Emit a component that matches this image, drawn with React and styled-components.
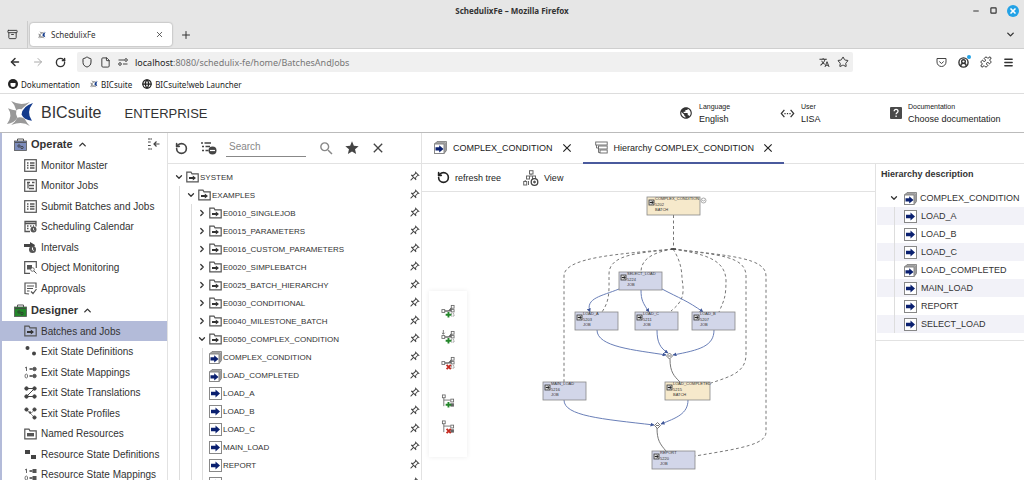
import { useState } from 'react';
import styled, { createGlobalStyle, css } from 'styled-components';
import {
    ArrowLeft,
    ArrowRight,
    Archive,
    ChevronDown,
    ChevronRight,
    ChevronUp,
    CircleUserRound,
    File,
    Globe,
    Menu,
    Minus,
    Plus,
    Puzzle,
    RotateCcw,
    RotateCw,
    Shield,
    Square,
    Star,
    X,
} from 'lucide-react';
import {
    MdClose,
    MdOutlinePushPin,
    MdPublic,
    MdSearch,
    MdSettingsEthernet,
    MdStar,
    MdTranslate,
} from 'react-icons/md';

const GlobalStyle = createGlobalStyle`
    * {
        box-sizing: border-box;
    }
    body {
        margin: 0;
        background: #fff;
        color: #333;
        font-family: 'Liberation Sans', Arial, sans-serif;
        font-size: 10px;
        overflow: hidden;
    }
    button, input {
        font: inherit;
        color: inherit;
    }
    button {
        padding: 0;
        border: none;
        background: none;
        cursor: pointer;
    }
    svg {
        display: block;
        flex: none;
    }
    ul {
        list-style: none;
        margin: 0;
        padding: 0;
    }
`;

/* ---------- browser window ---------- */

const Window = styled.div`
    display: flex;
    flex-direction: column;
    height: 100vh;
`;

const Chrome = styled.div`
    flex: none;
    font-family: 'Noto Sans', sans-serif;
    font-size: 8px;
    color: #333;
`;

const TitleBar = styled.div`
    display: grid;
    grid-template-columns: 1fr auto 1fr;
    align-items: center;
    height: 21px;
    padding: 0 5px;
    background: #e6e6e6;
    font-weight: bold;
`;

const WindowButtons = styled.div`
    grid-column: 3;
    display: flex;
    justify-content: flex-end;
    align-items: center;
    gap: 10px;
`;

const CloseWindow = styled.button`
    display: grid;
    place-items: center;
    width: 12px;
    height: 12px;
    border-radius: 50%;
    background: #23a2e6;
    color: #fff;
`;

const TabStrip = styled.div`
    display: flex;
    align-items: center;
    height: 28px;
    padding: 0 8px 0 7px;
    background: #e6e6e6;
    border-bottom: 1px solid #cfcfcf;
`;

const StripDivider = styled.div`
    align-self: stretch;
    width: 1px;
    margin: 0 2px 0 9px;
    background: #ccc;
`;

const BrowserTab = styled.div`
    display: flex;
    align-items: center;
    gap: 5px;
    width: 142px;
    height: 23px;
    padding: 0 8px;
    margin-right: 8px;
    border-radius: 3px;
    background: #fff;
    box-shadow: 0 0 2px rgba(0, 0, 0, 0.4);
    span {
        flex: 1;
    }
`;

const Push = styled.div`
    flex: 1;
`;

const NavBar = styled.div`
    display: flex;
    align-items: center;
    gap: 11px;
    height: 26px;
    padding: 0 10px 0 9px;
`;

const UrlBox = styled.div`
    flex: 1;
    display: flex;
    align-items: center;
    gap: 7px;
    height: 20px;
    padding: 0 4px;
    margin-right: 72px;
    border-radius: 2px;
    background: #f0f0f0;
`;

const Address = styled.div`
    flex: 1;
    color: #777;
    font-size: 9px;
    b {
        font-weight: normal;
        color: #222;
    }
`;

const AccountIcon = styled.button`
    position: relative;
    &::after {
        content: '';
        position: absolute;
        top: -2px;
        right: -2px;
        width: 4px;
        height: 4px;
        border-radius: 50%;
        background: #23a2e6;
    }
`;

const Bookmarks = styled.div`
    display: flex;
    align-items: center;
    gap: 10px;
    height: 19px;
    padding-left: 8px;
    border-bottom: 1px solid #ddd;
`;

const Bookmark = styled.a`
    display: flex;
    align-items: center;
    gap: 3px;
    color: #222;
    text-decoration: none;
`;

/* ---------- application header ---------- */

const Header = styled.header`
    flex: none;
    display: flex;
    align-items: center;
    height: 39px;
    padding: 0 24px 0 7px;
    border-bottom: 1px solid #bbb;
`;

const Brand = styled.span`
    margin: 0 23px 0 7px;
    font-size: 16px;
`;

const Edition = styled.span`
    flex: 1;
    font-size: 13px;
`;

const HeaderInfo = styled.div`
    display: grid;
    grid-template-columns: 101px 110px 110px;
`;

const InfoButton = styled.button`
    display: flex;
    align-items: center;
    gap: 6px;
    text-align: left;
    white-space: nowrap;
`;

const InfoText = styled.span`
    display: flex;
    flex-direction: column;
    font-size: 9px;
    line-height: 13px;
    color: #222;
    small {
        font-size: 7px;
        line-height: 12px;
    }
`;

/* ---------- sidebar ---------- */

const Body = styled.div`
    flex: 1;
    min-height: 0;
    display: flex;
`;

const Sidebar = styled.nav`
    flex: none;
    width: 168px;
    overflow: hidden;
    border-left: 2px solid #b3bbd9;
    border-right: 1px solid #e2e2e2;
`;

const Group = styled.section`
    padding-bottom: 1px;
`;

const GroupHeader = styled.div`
    display: flex;
    align-items: center;
    justify-content: space-between;
    height: 22px;
    padding: 0 7px 0 12px;
`;

const GroupToggle = styled.button`
    display: flex;
    align-items: center;
    gap: 4px;
    font-size: 11px;
    font-weight: bold;
`;

const MenuRow = styled.li`
    height: 20px;
    &:nth-child(even) {
        height: 21px;
    }
    ${(props) => props.$selected && css`
        background: #b3bbd9;
    `}
`;

const MenuLink = styled.a`
    display: flex;
    align-items: center;
    gap: 4px;
    height: 100%;
    padding-left: 22px;
    color: inherit;
    font-size: 10px;
    text-decoration: none;
    white-space: nowrap;
`;

/* ---------- object tree ---------- */

const TreePanel = styled.section`
    flex: none;
    width: 254px;
    overflow: hidden;
    border-right: 1px solid #e2e2e2;
`;

const TreeToolbar = styled.div`
    display: flex;
    align-items: center;
    height: 31px;
    padding-left: 6px;
    border-bottom: 1px solid #e2e2e2;
    color: #444;
`;

const SearchInput = styled.input`
    width: 80px;
    height: 17px;
    margin: 0 12px 0 9px;
    padding: 0 3px 2px;
    border: none;
    border-bottom: 1px solid #888;
    outline: none;
    background: none;
    &::placeholder {
        color: #888;
    }
`;

const ToolButton = styled.button`
    display: grid;
    place-items: center;
    width: 14px;
    height: 16px;
    margin-right: ${(props) => props.$gap || 12}px;
`;

const TreeList = styled.ul`
    padding: 4px 0;
`;

const TreeRow = styled.li`
    display: flex;
    align-items: center;
    height: 18px;
    padding: 0 0 0 5px;
    font-size: ${(props) => props.$size || 8}px;
    white-space: nowrap;
    background: ${(props) => (props.$shaded ? '#f2f2f8' : 'none')};
`;

const Guide = styled.span`
    width: ${(props) => (props.$last ? 5 : 6)}px;
    height: 100%;
    margin-left: 6px;
    border-left: 1px solid #ddd;
`;

const Twisty = styled.button`
    display: grid;
    place-items: center;
    width: 12px;
    height: 12px;
    margin-right: 1px;
`;

const Branch = styled.span`
    width: ${(props) => props.$width}px;
    height: 1px;
    margin-right: 2px;
    background: ${(props) => (props.$plain ? 'none' : '#ddd')};
`;

const NodeName = styled.span`
    flex: 1;
    padding-left: ${(props) => props.$pad || 1}px;
`;

const PinButton = styled.button`
    margin-right: 1px;
    color: #444;
    svg {
        transform: rotate(45deg);
    }
`;

/* ---------- work area ---------- */

const Work = styled.main`
    flex: 1;
    min-width: 0;
    display: flex;
    flex-direction: column;
`;

const Tabs = styled.div`
    flex: none;
    display: flex;
    height: 31px;
    border-bottom: 1px solid #e2e2e2;
    font-size: 9px;
    color: #222;
`;

const Tab = styled.div`
    display: flex;
    align-items: center;
    padding: 0 9px 0 12px;
    margin-bottom: -1px;
    border-bottom: 2px solid ${(props) => (props.$active ? '#4a5a9d' : 'transparent')};
    span {
        margin: 0 7px 0 6px;
    }
`;

const Columns = styled.div`
    flex: 1;
    min-height: 0;
    display: flex;
`;

const Hierarchy = styled.section`
    flex: 1;
    min-width: 0;
`;

const Actions = styled.div`
    display: flex;
    align-items: center;
    gap: 22px;
    height: 28px;
    padding-left: 15px;
    border-bottom: 1px solid #e2e2e2;
`;

const Action = styled.button`
    display: flex;
    align-items: center;
    gap: 5px;
    font-size: 9px;
    color: #222;
`;

const Canvas = styled.div`
    position: relative;
    display: flex;
    justify-content: center;
`;

const Palette = styled.div`
    position: absolute;
    left: 7px;
    top: 99px;
    display: flex;
    flex-direction: column;
    align-items: center;
    gap: 12px;
    width: 38px;
    padding: 13px 0 23px;
    background: #fff;
    box-shadow: 0 0 5px rgba(0, 0, 0, 0.08);
    button:nth-child(4) {
        margin-top: 12px;
    }
`;

const Description = styled.aside`
    flex: none;
    width: 149px;
    border-left: 1px solid #e2e2e2;
    h2 {
        margin: 0;
        padding: 3px 0 5px 5px;
        font-size: 9px;
        line-height: 15px;
    }
`;

const DescriptionTree = styled.ul`
    padding: 2px 0 7px 1px;
    border-bottom: 1px solid #e2e2e2;
`;

/* ---------- icons ---------- */

const LogoIcon = ({ size }) => (
    <svg width={size} height={size} viewBox="0 0 26 26">
        <path d="M4 1Q13 6 22 2Q16 7 14 9Q11 8 9 10Q8 5 4 1Z" fill="#999" />
        <path d="M1 8Q5 10 9 10Q8 13 10 17Q7 22 0 23Q6 15 1 8Z" fill="#999" />
        <path d="M10 17Q13 16 17 18Q19 22 22 25Q15 20 4 24Q8 21 10 17Z" fill="#999" />
        <path d="M25 3Q18 12 24 20Q16 19 14 14Q15 6 25 3Z" fill="#123a8c" />
    </svg>
);

const FolderIcon = ({ bar }) => (
    <svg width="13" height="12" viewBox="0 0 13 12">
        <path d="M.8 10.8V1.2H5l1 1.6h6.2v8z" fill="none" stroke="#555" strokeWidth="1.2" />
        {bar ? (
            <rect x="3" y="5" width="7" height="3.4" fill="#555" />
        ) : (
            <path d="M3 6h3.800V4.500L10 7 6.800 9.500V8H3z" fill="#333" />
        )}
    </svg>
);

const JobIcon = () => (
    <svg width="13" height="13" viewBox="0 0 13 13">
        <rect x=".5" y=".5" width="12" height="12" fill="#fff" stroke="#888" />
        <path d="M2 4.8h4.5V2.6L11 6.5 6.500 10.400V8.200H2z" fill="#0a2070" />
    </svg>
);

const BatchIcon = () => (
    <svg width="13" height="13" viewBox="0 0 13 13">
        <path d="M3 .5h9.500V9.500L10 12.500V3H.5z" fill="#ccc" stroke="#777" strokeWidth=".8" />
        <path d="M1.800 1.800H11.300V11" fill="none" stroke="#777" strokeWidth=".7" />
        <rect x=".5" y="3" width="9.500" height="9.500" fill="#fff" stroke="#888" />
        <path d="M1.500 6.200h3.700V4.300l4.300 3.600-4.300 3.600V9.600H1.500z" fill="#0a2070" />
    </svg>
);

const CaseIcon = ({ color }) => (
    <svg width="13" height="13" viewBox="0 0 13 13">
        <path d="M3.500 3V1h6v2" fill="none" stroke="#555" />
        <rect x=".5" y="3" width="12" height="9.500" fill={color} stroke="#555" strokeWidth=".8" />
        <path d="M1 4.500h11" stroke="#444" strokeWidth=".8" />
        <circle cx="5" cy="8" r="1.200" fill="none" stroke="#333" strokeWidth=".8" />
        <circle cx="8" cy="9.500" r="1.200" fill="none" stroke="#333" strokeWidth=".8" />
    </svg>
);

const menuDrawings = {
    list: (
        <g fill="none" stroke="#555">
            <rect x=".7" y=".7" width="11.600" height="11.600" strokeWidth="1.200" />
            <path d="M3 4h1.500M3 6.500h1.500M3 9h1.500M6 4h4.500M6 6.500h4.500M6 9h4.500" strokeWidth="1.300" />
        </g>
    ),
    jobs: (
        <g fill="none" stroke="#555">
            <rect x=".7" y=".7" width="11.600" height="11.600" strokeWidth="1.200" />
            <path d="M3 3.500h3M4 3.500v6M5 6.500h5M5 9.500h5M8 3.500h2.500" strokeWidth="1.300" />
        </g>
    ),
    calendar: (
        <g fill="none" stroke="#555">
            <path d="M6 11.500H1V1.500h11v5M1 3.500h11" strokeWidth="1.300" />
            <path d="M3 6h1.500M6 6h1.500M3 8.500h1.500M9 6h1" strokeWidth="1.300" />
            <circle cx="9.500" cy="9.500" r="3" fill="#555" stroke="none" />
            <path d="M9.500 8v2l1 .5" stroke="#fff" strokeWidth=".7" />
        </g>
    ),
    interval: (
        <g>
            <path d="M0 3h6V1l5 3-1 2H0z" fill="#444" />
            <circle cx="8.500" cy="8.500" r="3.500" fill="#555" />
            <path d="M8.500 6.500v2.300l1.300.7" stroke="#fff" fill="none" />
        </g>
    ),
    monitor: (
        <g fill="none" stroke="#555">
            <path d="M6 12.300H.7V.7h11.600V7" strokeWidth="1.200" />
            <rect x="3" y="4" width="5" height="4.500" fill="#555" stroke="none" />
            <circle cx="8.500" cy="8.500" r="1.800" fill="#fff" strokeWidth=".8" />
            <path d="M10 10l2.500 2.500" />
        </g>
    ),
    approve: (
        <g fill="none" stroke="#555" strokeWidth="1.200">
            <path d="M5 12L1 11.500V1h11v5M3 4h7M3 6.500h6M3 9h2.500M7 9.500l2 2 3.500-4.500" />
        </g>
    ),
    dots: (
        <g fill="#444">
            <circle cx="3.500" cy="3" r="2" />
            <circle cx="10" cy="8.500" r="2" />
        </g>
    ),
    mapping: (
        <g fill="#555" stroke="#555">
            <path d="M1 2l1.500-1v4M5 3h4M5 10h4" fill="none" strokeWidth=".9" />
            <ellipse cx="2.300" cy="10" rx="1.300" ry="2" fill="none" strokeWidth=".8" />
            <circle cx="7" cy="3" r=".6" />
            <circle cx="7" cy="10" r=".6" />
            <circle cx="10.500" cy="3" r="1.700" />
            <circle cx="10.500" cy="10" r="1.700" />
        </g>
    ),
    translation: (
        <g fill="#444" stroke="#444">
            <path d="M2.500 2.500h8l-8 8h8" fill="none" />
            <circle cx="2.500" cy="2.500" r="1.700" />
            <circle cx="10.500" cy="2.500" r="1.700" />
            <circle cx="2.500" cy="10.500" r="1.700" />
            <circle cx="10.500" cy="10.500" r="1.700" />
        </g>
    ),
    profile: (
        <g fill="#444" stroke="#444">
            <path d="M2 2.500l5 4 3.500-4M6 6l4.500 4.500" fill="none" strokeWidth=".6" />
            <circle cx="2.500" cy="2.500" r="1.600" />
            <circle cx="10.500" cy="2.500" r="1.600" />
            <circle cx="6" cy="5.500" r=".8" />
            <circle cx="10.500" cy="10.500" r="1.600" />
        </g>
    ),
    squares: (
        <g fill="#444">
            <rect x="1" y="2" width="5" height="4" />
            <rect x="7" y="7" width="5" height="4" />
        </g>
    ),
    squareMapping: (
        <g fill="#555" stroke="#555">
            <path d="M1 2l1.500-1v4M5 3h4M5 10h4" fill="none" strokeWidth=".9" />
            <ellipse cx="2.300" cy="10" rx="1.300" ry="2" fill="none" strokeWidth=".8" />
            <circle cx="7" cy="3" r=".6" />
            <circle cx="7" cy="10" r=".6" />
            <rect x="9" y="1.500" width="3" height="3" />
            <rect x="9" y="8.500" width="3" height="3" />
        </g>
    ),
};

const MenuIcon = ({ name }) => {
    if (name === 'folder') return <FolderIcon />;
    if (name === 'resource') return <FolderIcon bar />;
    return (
        <svg width="13" height="13" viewBox="0 0 13 13">
            {menuDrawings[name]}
        </svg>
    );
};

const CollapseIcon = () => (
    <svg width="13" height="12" viewBox="0 0 13 12">
        <path d="M1 1h4M1 4h3M1 7.500h3M1 11h4" stroke="#444" strokeWidth="1.200" strokeDasharray="2.500 .3" />
        <path d="M12.500 6H7M9.500 3.500L7 6l2.500 2.500" fill="none" stroke="#444" strokeWidth="1.200" />
    </svg>
);

const CollapseTreeIcon = () => (
    <svg width="17" height="14" viewBox="0 0 17 14">
        <path d="M1 2h2M4.500 2H11M2 5.500h2M5.500 5.500H10M2 9.500h2M5.500 9.500h3" stroke="#444" strokeWidth="1.700" />
        <circle cx="12.500" cy="9.500" r="4" fill="#444" />
        <path d="M10 9.500h5" stroke="#fff" strokeWidth="1.200" />
    </svg>
);

const HierarchyIcon = () => (
    <svg width="13" height="13" viewBox="0 0 13 13">
        <g fill="#fff" stroke="#666" strokeWidth=".9">
            <path d="M1.500 3v4h3M3.500 6v5.500h3" fill="none" />
            <rect x=".7" y="1" width="11.500" height="3" />
            <rect x="3.500" y="5" width="8.700" height="3" />
            <rect x="5" y="9" width="7.200" height="3" />
        </g>
    </svg>
);

const ViewIcon = () => (
    <svg width="16" height="16" viewBox="0 0 16 16">
        <g fill="none" stroke="#666">
            <rect x="6.500" y=".7" width="3.500" height="3.300" />
            <rect x="3.500" y="6" width="3" height="3" />
            <rect x="9.500" y="6" width="3" height="3" />
            <path d="M8 4v3" />
            <path d="M2.200 11.500V10" />
            <rect x=".7" y="11.500" width="3" height="3.500" />
            <path d="M5.500 15v-4" />
            <circle cx="11.500" cy="12" r="3.300" fill="#fff" stroke="#444" strokeWidth="1.300" />
            <circle cx="11.500" cy="12" r="1" fill="#333" />
        </g>
    </svg>
);

const PaletteIcon = ({ side, arrow, remove }) => (
    <svg width="14" height="14" viewBox="0 0 15 15">
        <g fill="#fff" stroke="#666" strokeWidth=".9">
            {side ? (
                <>
                    <path d="M3 4v9M3 6.500h7" fill="none" />
                    <rect x="1.500" y="1" width="3" height="3" />
                    <rect x="10.500" y="5.500" width="3" height="3" />
                    <rect x="10.500" y="10.500" width="3" height="2.500" fill="#666" />
                </>
            ) : (
                <>
                    <path d="M4 7.500h7v-3.500l-3 3.500z" fill="#666" strokeWidth="1" />
                    {arrow && <path d="M2.500 0v4.500M1 3l1.500 1.500L4 3" fill="none" />}
                    <rect x="1" y="6" width="3" height="3" />
                    <rect x="11" y="1.500" width="3" height="3" />
                    <rect x="11" y="6" width="3" height="2.500" />
                    <rect x="11" y="10.500" width="3" height="2.500" strokeDasharray="1 1" />
                </>
            )}
        </g>
        {remove ? (
            <path d="M6 9.500l4.500 4.500M10.500 9.500L6 14" stroke="#c42a20" strokeWidth="2" />
        ) : (
            <path d="M8 8.500v6M5 11.500h6" stroke="#23862a" strokeWidth="2" />
        )}
    </svg>
);

const HelpIcon = () => (
    <svg width="12" height="12" viewBox="0 0 12 12">
        <rect width="12" height="12" rx="1" fill="#4a4a4a" />
        <path d="M4.200 4.300C4.200 1.700 8 1.800 8 4.200 8 5.700 6.100 5.700 6.100 7.300M6.100 8.400v1.500" fill="none" stroke="#fff" strokeWidth="1.300" />
    </svg>
);

const PermissionsIcon = () => (
    <svg width="10" height="8" viewBox="0 0 10 8" fill="none" stroke="#444">
        <path d="M.5 2H6M5 6h4.500" />
        <circle cx="8" cy="2" r="1.300" />
        <circle cx="2" cy="6" r="1.300" />
    </svg>
);

const PocketIcon = () => (
    <svg width="11" height="11" viewBox="0 0 11 11" fill="none" stroke="#444">
        <path d="M1 1.500h9v3.500a4.500 4.500 0 0 1-9 0zM3.300 4.500L5.500 6.500l2.200-2" />
    </svg>
);

const DocumentationMark = () => (
    <svg width="10" height="10" viewBox="0 0 10 10">
        <circle cx="5" cy="5" r="5" fill="#222" />
        <path d="M2.500 4h5v1.500a2.500 2.500 0 0 1-5 0z" fill="#fff" />
    </svg>
);

/* ---------- data ---------- */

const operateItems = [
    ['Monitor Master', 'list'],
    ['Monitor Jobs', 'jobs'],
    ['Submit Batches and Jobs', 'list'],
    ['Scheduling Calendar', 'calendar'],
    ['Intervals', 'interval'],
    ['Object Monitoring', 'monitor'],
    ['Approvals', 'approve'],
];

const designerItems = [
    ['Batches and Jobs', 'folder'],
    ['Exit State Definitions', 'dots'],
    ['Exit State Mappings', 'mapping'],
    ['Exit State Translations', 'translation'],
    ['Exit State Profiles', 'profile'],
    ['Named Resources', 'resource'],
    ['Resource State Definitions', 'squares'],
    ['Resource State Mappings', 'squareMapping'],
];

const treeNodes = [
    { name: 'SYSTEM', depth: 0, type: 'folder', open: true },
    { name: 'EXAMPLES', depth: 1, type: 'folder', open: true },
    { name: 'E0010_SINGLEJOB', depth: 2, type: 'folder' },
    { name: 'E0015_PARAMETERS', depth: 2, type: 'folder' },
    { name: 'E0016_CUSTOM_PARAMETERS', depth: 2, type: 'folder' },
    { name: 'E0020_SIMPLEBATCH', depth: 2, type: 'folder' },
    { name: 'E0025_BATCH_HIERARCHY', depth: 2, type: 'folder' },
    { name: 'E0030_CONDITIONAL', depth: 2, type: 'folder' },
    { name: 'E0040_MILESTONE_BATCH', depth: 2, type: 'folder' },
    { name: 'E0050_COMPLEX_CONDITION', depth: 2, type: 'folder', open: true },
    { name: 'COMPLEX_CONDITION', depth: 3, type: 'batch' },
    { name: 'LOAD_COMPLETED', depth: 3, type: 'batch' },
    { name: 'LOAD_A', depth: 3, type: 'job' },
    { name: 'LOAD_B', depth: 3, type: 'job' },
    { name: 'LOAD_C', depth: 3, type: 'job' },
    { name: 'MAIN_LOAD', depth: 3, type: 'job' },
    { name: 'REPORT', depth: 3, type: 'job' },
    { name: 'SELECT_LOAD', depth: 3, type: 'job' },
];

const hierarchyChildren = [
    ['LOAD_A', 'job'],
    ['LOAD_B', 'job'],
    ['LOAD_C', 'job'],
    ['LOAD_COMPLETED', 'batch'],
    ['MAIN_LOAD', 'job'],
    ['REPORT', 'job'],
    ['SELECT_LOAD', 'job'],
];

const graphNodes = [
    { name: 'COMPLEX_CONDITION', id: '5202', x: 225, y: 5, w: 53, batch: true },
    { name: 'SELECT_LOAD', id: '5224', x: 197, y: 80, w: 43 },
    { name: 'LOAD_A', id: '5203', x: 153, y: 120, w: 43 },
    { name: 'LOAD_C', id: '5211', x: 213, y: 120, w: 43 },
    { name: 'LOAD_B', id: '5207', x: 270, y: 120, w: 43 },
    { name: 'MAIN_LOAD', id: '5216', x: 121, y: 190, w: 43 },
    { name: 'LOAD_COMPLETED', id: '5215', x: 243, y: 190, w: 45, batch: true },
    { name: 'REPORT', id: '5220', x: 230, y: 259, w: 43 },
];

const childEdges = [
    'M251.500 23V57',
    'M251 57C198 62 142 65 142 84V190',
    'M251 57C233 60 219 66 219 80',
    'M251 57C222 61 187 61 187 82C187 100 188 108 180 120',
    'M251 57C257 66 260 76 260 87C263 104 260 110 249 119',
    'M251 57C282 62 303 67 304 88C304 106 302 108 297 120',
    'M251 57C296 63 324 64 324 84V162C324 180 310 184 289 191',
    'M251 57C310 64 344 66 344 84V240C344 252 322 256 273 264',
];

const dependencyEdges = [
    'M197 97C180 104 163 106 168 120',
    'M219 98C219 108 221 111 227 120',
    'M240 97C257 106 266 109 281 120',
    'M175 138C175 155 213 158 244 163',
    'M235 138C235 150 238 156 246 161',
    'M292 138C292 154 278 158 251 163',
    'M142 208C142 224 180 227 232 233',
    'M266 208C266 222 254 226 239 232',
];

const joinEdges = ['M248 167C248 180 252 184 258 190', 'M235 236C235 248 238 252 244 259'];

/* ---------- components ---------- */

function MenuGroup({ title, color, items, open, onToggle, extra, selected }) {
    return (
        <Group>
            <GroupHeader>
                <GroupToggle onClick={onToggle} aria-expanded={open}>
                    <CaseIcon color={color} />
                    {title}
                    {open ? <ChevronUp size={11} strokeWidth={3} /> : <ChevronDown size={11} strokeWidth={3} />}
                </GroupToggle>
                {extra}
            </GroupHeader>
            {open && (
                <ul>
                    {items.map(([label, icon]) => (
                        <MenuRow key={label} $selected={label === selected}>
                            <MenuLink href="#">
                                <MenuIcon name={icon} />
                                {label}
                            </MenuLink>
                        </MenuRow>
                    ))}
                </ul>
            )}
        </Group>
    );
}

function TypeIcon({ type }) {
    if (type === 'folder') return <FolderIcon />;
    return type === 'batch' ? <BatchIcon /> : <JobIcon />;
}

function TreeNode({ node }) {
    const isFolder = node.type === 'folder';
    const guides = isFolder ? node.depth : node.depth - 1;
    return (
        <TreeRow>
            {Array.from({ length: guides }, (_, i) => (
                <Guide key={i} $last={i > 0} />
            ))}
            {isFolder ? (
                <Twisty aria-label={node.open ? 'Collapse' : 'Expand'}>
                    {node.open ? <ChevronDown size={10} strokeWidth={3} /> : <ChevronRight size={10} strokeWidth={3} />}
                </Twisty>
            ) : (
                <>
                    <Guide $last />
                    <Branch $width={0} />
                </>
            )}
            <TypeIcon type={node.type} />
            <NodeName>{node.name}</NodeName>
            <PinButton aria-label="Pin">
                <MdOutlinePushPin size={12} />
            </PinButton>
        </TreeRow>
    );
}

function GraphNode({ node }) {
    return (
        <g transform={`translate(${node.x} ${node.y})`}>
            <rect width={node.w} height="18" fill={node.batch ? '#f6e9cb' : '#d2d6e9'} stroke="#888" strokeWidth=".8" />
            <rect x="2" y="3" width="5" height="5" fill="#ddd" stroke="#333" strokeWidth=".8" />
            <path d="M2.800 5.500h3M4.700 4.200l1.600 1.300-1.600 1.300" stroke="#111" strokeWidth=".9" fill="none" />
            <g fontSize="4" fill="#333">
                <text x="8" y="3">{node.name}</text>
                <text x="8" y="9">{node.id}</text>
                <text x="8" y="14">{node.batch ? 'BATCH' : 'JOB'}</text>
            </g>
        </g>
    );
}

function Graph() {
    return (
        <svg width="454" height="288" viewBox="0 0 454 288">
            <defs>
                <marker id="tip" viewBox="0 0 4 4" refX="3.500" refY="2" markerWidth="4" markerHeight="4" orient="auto" markerUnits="userSpaceOnUse">
                    <path d="M0 0L4 2 0 4z" fill="#3f5799" />
                </marker>
            </defs>
            <g fill="none" stroke="#777" strokeDasharray="3 2.500">
                {childEdges.map((d) => <path key={d} d={d} />)}
            </g>
            <g fill="none" stroke="#6a7fb8">
                {dependencyEdges.map((d) => <path key={d} d={d} markerEnd="url(#tip)" />)}
            </g>
            <g fill="none" stroke="#777">
                {joinEdges.map((d) => <path key={d} d={d} />)}
            </g>
            <path d="M249 57h5" stroke="#333" strokeWidth="1.200" />
            <g fill="#fff" stroke="#666" strokeWidth=".9">
                <path d="M247.500 161l3 3-3 3-3-3zM235.500 230.500l3 3-3 3-3-3z" />
                <path d="M246 164h3M234 233.500h3" />
                <circle cx="281.500" cy="8.500" r="2.500" stroke="#888" strokeWidth=".7" />
                <path d="M280 8l1.500 1 1.500-1" fill="none" stroke="#888" strokeWidth=".7" />
            </g>
            {graphNodes.map((node) => <GraphNode key={node.name} node={node} />)}
        </svg>
    );
}

function BrowserChrome() {
    return (
        <Chrome>
            <TitleBar>
                <span />
                <span>SchedulixFe – Mozilla Firefox</span>
                <WindowButtons>
                    <Minus size={8} strokeWidth={3} />
                    <Square size={7} strokeWidth={4} />
                    <CloseWindow aria-label="Close window">
                        <X size={8} strokeWidth={5} />
                    </CloseWindow>
                </WindowButtons>
            </TitleBar>
            <TabStrip>
                <Archive size={11} />
                <StripDivider />
                <BrowserTab>
                    <LogoIcon size={8} />
                    <span>SchedulixFe</span>
                    <X size={9} />
                </BrowserTab>
                <Plus size={12} strokeWidth={2} />
                <Push />
                <ChevronDown size={11} strokeWidth={3} />
            </TabStrip>
            <NavBar>
                <ArrowLeft size={12} strokeWidth={3} />
                <ArrowRight size={12} color="#aaa" />
                <RotateCw size={11} strokeWidth={3} />
                <UrlBox>
                    <Shield size={12} />
                    <File size={11} />
                    <PermissionsIcon />
                    <Address>
                        <b>localhost</b>:8080/schedulix-fe/home/BatchesAndJobs
                    </Address>
                    <MdTranslate size={11} />
                    <Star size={12} />
                </UrlBox>
                <PocketIcon />
                <AccountIcon aria-label="Account">
                    <CircleUserRound size={11} strokeWidth={3} />
                </AccountIcon>
                <Puzzle size={12} />
                <Menu size={11} strokeWidth={3} />
            </NavBar>
            <Bookmarks>
                <Bookmark href="#">
                    <DocumentationMark />
                    Dokumentation
                </Bookmark>
                <Bookmark href="#">
                    <LogoIcon size={8} />
                    BICsuite
                </Bookmark>
                <Bookmark href="#">
                    <Globe size={10} strokeWidth={3} />
                    BICsuite!web Launcher
                </Bookmark>
            </Bookmarks>
        </Chrome>
    );
}

export default function App() {
    const [search, setSearch] = useState('');
    const [operateOpen, setOperateOpen] = useState(true);
    const [designerOpen, setDesignerOpen] = useState(true);

    return (
        <Window>
            <GlobalStyle />
            <BrowserChrome />
            <Header>
                <LogoIcon size={27} />
                <Brand>BICsuite</Brand>
                <Edition>ENTERPRISE</Edition>
                <HeaderInfo>
                    <InfoButton>
                        <MdPublic size={14} />
                        <InfoText>
                            <small>Language</small>
                            English
                        </InfoText>
                    </InfoButton>
                    <InfoButton>
                        <MdSettingsEthernet size={15} />
                        <InfoText>
                            <small>User</small>
                            LISA
                        </InfoText>
                    </InfoButton>
                    <InfoButton>
                        <HelpIcon />
                        <InfoText>
                            <small>Documentation</small>
                            Choose documentation
                        </InfoText>
                    </InfoButton>
                </HeaderInfo>
            </Header>
            <Body>
                <Sidebar>
                    <MenuGroup
                        title="Operate"
                        color="#7c8cbc"
                        items={operateItems}
                        open={operateOpen}
                        onToggle={() => setOperateOpen(!operateOpen)}
                        extra={
                            <button aria-label="Collapse menu">
                                <CollapseIcon />
                            </button>
                        }
                    />
                    <MenuGroup
                        title="Designer"
                        color="#23862a"
                        items={designerItems}
                        open={designerOpen}
                        onToggle={() => setDesignerOpen(!designerOpen)}
                        selected="Batches and Jobs"
                    />
                </Sidebar>
                <TreePanel>
                    <TreeToolbar>
                        <ToolButton aria-label="Refresh">
                            <RotateCcw size={13} strokeWidth={3} />
                        </ToolButton>
                        <button aria-label="Collapse tree">
                            <CollapseTreeIcon />
                        </button>
                        <SearchInput
                            aria-label="Search"
                            placeholder="Search"
                            value={search}
                            onChange={(event) => setSearch(event.target.value)}
                        />
                        <ToolButton aria-label="Find">
                            <MdSearch size={17} color="#888" />
                        </ToolButton>
                        <ToolButton aria-label="Favourites">
                            <MdStar size={16} />
                        </ToolButton>
                        <ToolButton aria-label="Clear">
                            <MdClose size={16} />
                        </ToolButton>
                    </TreeToolbar>
                    <TreeList>
                        {treeNodes.map((node) => (
                            <TreeNode key={node.name} node={node} />
                        ))}
                    </TreeList>
                </TreePanel>
                <Work>
                    <Tabs>
                        <Tab>
                            <BatchIcon />
                            <span>COMPLEX_CONDITION</span>
                            <button aria-label="Close tab">
                                <MdClose size={14} />
                            </button>
                        </Tab>
                        <Tab $active>
                            <HierarchyIcon />
                            <span>Hierarchy COMPLEX_CONDITION</span>
                            <button aria-label="Close tab">
                                <MdClose size={14} />
                            </button>
                        </Tab>
                    </Tabs>
                    <Columns>
                        <Hierarchy>
                            <Actions>
                                <Action>
                                    <RotateCcw size={13} strokeWidth={3} />
                                    refresh tree
                                </Action>
                                <Action>
                                    <ViewIcon />
                                    View
                                </Action>
                            </Actions>
                            <Canvas>
                                <Graph />
                                <Palette>
                                    <button aria-label="Add child">
                                        <PaletteIcon />
                                    </button>
                                    <button aria-label="Insert child">
                                        <PaletteIcon arrow />
                                    </button>
                                    <button aria-label="Remove child">
                                        <PaletteIcon remove />
                                    </button>
                                    <button aria-label="Add dependency">
                                        <PaletteIcon side />
                                    </button>
                                    <button aria-label="Remove dependency">
                                        <PaletteIcon side remove />
                                    </button>
                                </Palette>
                            </Canvas>
                        </Hierarchy>
                        <Description>
                            <h2>Hierarchy description</h2>
                            <DescriptionTree>
                                <TreeRow $size={9}>
                                    <Branch $width={4} $plain />
                                    <Twisty aria-label="Collapse">
                                        <ChevronDown size={10} strokeWidth={3} />
                                    </Twisty>
                                    <Branch $width={1} $plain />
                                    <BatchIcon />
                                    <NodeName $pad={3}>COMPLEX_CONDITION</NodeName>
                                </TreeRow>
                                {hierarchyChildren.map(([name, type], i) => (
                                    <TreeRow key={name} $size={9} $shaded={i % 2 === 0}>
                                        <Branch $width={4} $plain />
                                        <Guide />
                                        <Branch $width={2} $plain />
                                        <TypeIcon type={type} />
                                        <NodeName $pad={4}>{name}</NodeName>
                                    </TreeRow>
                                ))}
                            </DescriptionTree>
                        </Description>
                    </Columns>
                </Work>
            </Body>
        </Window>
    );
}
